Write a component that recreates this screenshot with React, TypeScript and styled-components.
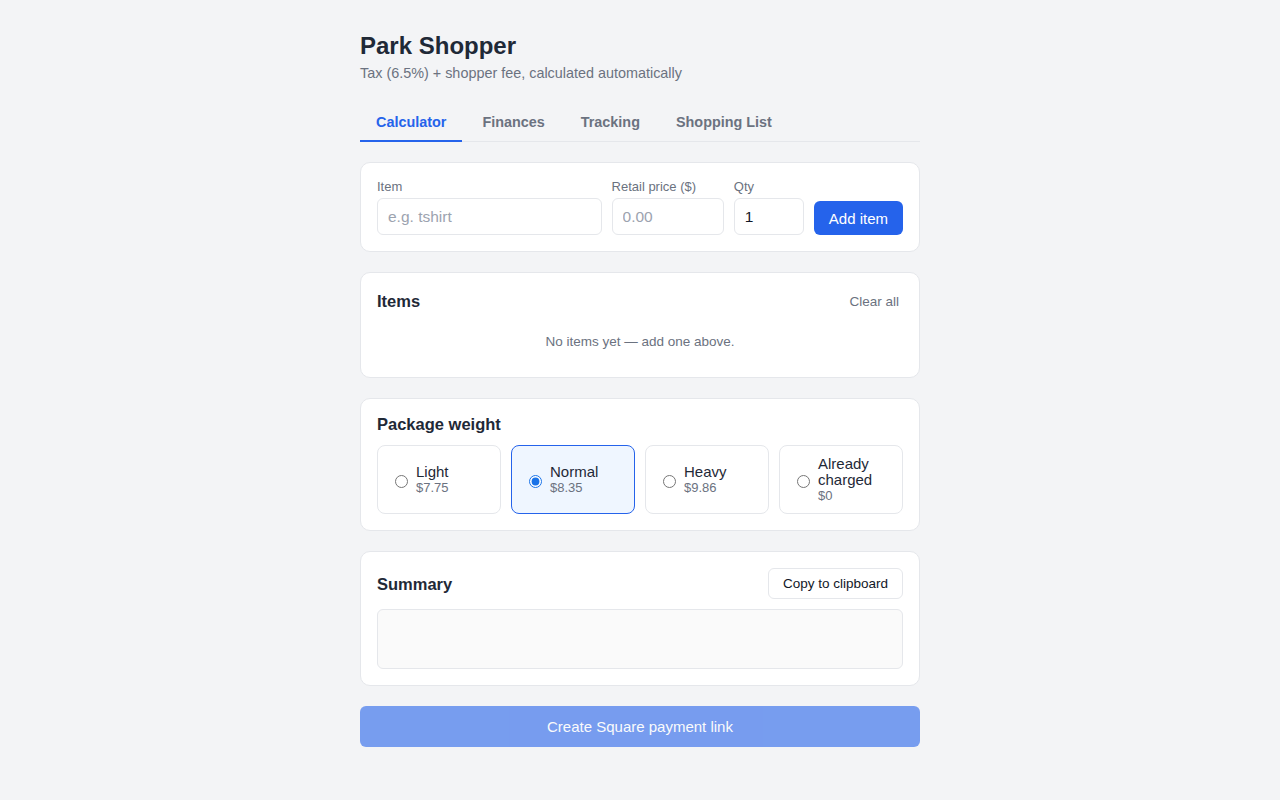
import { useState } from 'react';
import styled, { createGlobalStyle } from 'styled-components';

const GlobalStyle = createGlobalStyle`
  body {
    margin: 0;
    background: #f3f4f6;
    font-family: "Liberation Sans", Arial, sans-serif;
    color: #1f2937;
  }
  * {
    box-sizing: border-box;
  }
`;

type Weight = {
  id: string;
  name: string;
  price: string;
};

const weights: Weight[] = [
  { id: 'light', name: 'Light', price: '$7.75' },
  { id: 'normal', name: 'Normal', price: '$8.35' },
  { id: 'heavy', name: 'Heavy', price: '$9.86' },
  { id: 'charged', name: 'Already charged', price: '$0' },
];

const tabs = ['Calculator', 'Finances', 'Tracking', 'Shopping List'];

const App = () => {
  const [activeTab, setActiveTab] = useState<string>('Calculator');
  const [weight, setWeight] = useState<string>('normal');
  const [qty, setQty] = useState<string>('1');

  return (
    <>
      <GlobalStyle />
      <Page>
        <Title>Park Shopper</Title>
        <Subtitle>Tax (6.5%) + shopper fee, calculated automatically</Subtitle>

        <TabBar>
          {tabs.map((tab) => (
            <Tab key={tab} active={tab === activeTab} onClick={() => setActiveTab(tab)}>
              {tab}
            </Tab>
          ))}
        </TabBar>

        <Card>
          <AddForm>
            <Field>
              <Label>Item</Label>
              <Input placeholder="e.g. tshirt" />
            </Field>
            <Field>
              <Label>Retail price ($)</Label>
              <Input placeholder="0.00" />
            </Field>
            <Field>
              <Label>Qty</Label>
              <Input value={qty} onChange={(e) => setQty(e.target.value)} />
            </Field>
            <PrimaryButton>Add item</PrimaryButton>
          </AddForm>
        </Card>

        <Card>
          <CardHeader>
            <CardTitle>Items</CardTitle>
            <LinkButton>Clear all</LinkButton>
          </CardHeader>
          <EmptyText>No items yet — add one above.</EmptyText>
        </Card>

        <Card>
          <CardTitle>Package weight</CardTitle>
          <WeightGrid>
            {weights.map((w) => (
              <WeightOption key={w.id} selected={w.id === weight}>
                <Radio
                  type="radio"
                  name="weight"
                  checked={w.id === weight}
                  onChange={() => setWeight(w.id)}
                />
                <WeightText>
                  <WeightName>{w.name}</WeightName>
                  <WeightPrice>{w.price}</WeightPrice>
                </WeightText>
              </WeightOption>
            ))}
          </WeightGrid>
        </Card>

        <Card>
          <CardHeader>
            <CardTitle>Summary</CardTitle>
            <SecondaryButton>Copy to clipboard</SecondaryButton>
          </CardHeader>
          <SummaryBox />
        </Card>

        <PaymentButton disabled>Create Square payment link</PaymentButton>
      </Page>
    </>
  );
};

const Page = styled.div`
  width: 560px;
  margin: 0 auto;
  padding: 31px 0 40px;
  display: flex;
  flex-direction: column;
`;

const Title = styled.h1`
  margin: 0;
  font-size: 24px;
  font-weight: 700;
  line-height: 30px;
  color: #1f2937;
`;

const Subtitle = styled.p`
  margin: 2px 0 0;
  font-size: 14.4px;
  line-height: 20px;
  color: #6b7280;
`;

const TabBar = styled.div`
  display: flex;
  gap: 4px;
  margin-top: 19px;
  margin-bottom: 20px;
  border-bottom: 1px solid #e5e7eb;
`;

const Tab = styled.button<{ active: boolean }>`
  background: none;
  border: none;
  border-bottom: 2px solid ${(p) => (p.active ? '#2563eb' : 'transparent')};
  margin-bottom: -1px;
  padding: 12px 16px 9px;
  font-family: inherit;
  font-size: 14.4px;
  font-weight: 700;
  line-height: 17px;
  color: ${(p) => (p.active ? '#2563eb' : '#6b7280')};
  cursor: pointer;
`;

const Card = styled.section`
  background: #ffffff;
  border: 1px solid #e5e7eb;
  border-radius: 10px;
  padding: 16px;
  margin-bottom: 20px;
`;

const AddForm = styled.div`
  display: grid;
  grid-template-columns: 2fr 1fr 70px auto;
  gap: 10px;
  align-items: end;
`;

const Field = styled.label`
  display: flex;
  flex-direction: column;
  gap: 4px;
`;

const Label = styled.span`
  font-size: 13px;
  line-height: 15px;
  color: #6b7280;
`;

const Input = styled.input`
  width: 100%;
  height: 37px;
  padding: 0 10px;
  border: 1px solid #e5e7eb;
  border-radius: 6px;
  font-family: inherit;
  font-size: 15.5px;
  color: #111827;
  background: #ffffff;

  &::placeholder {
    color: #9ca3af;
  }
`;

const PrimaryButton = styled.button`
  height: 34px;
  padding: 0 15px;
  border: none;
  border-radius: 6px;
  background: #2563eb;
  color: #ffffff;
  font-family: inherit;
  font-size: 15px;
  cursor: pointer;
`;

const CardHeader = styled.div`
  display: flex;
  align-items: center;
  justify-content: space-between;
  min-height: 24px;
`;

const CardTitle = styled.h2`
  margin: 0;
  font-size: 16.5px;
  font-weight: 700;
  line-height: 18px;
  color: #1f2937;
`;

const LinkButton = styled.button`
  background: none;
  border: none;
  padding: 4px;
  font-family: inherit;
  font-size: 13.5px;
  color: #6b7280;
  cursor: pointer;
`;

const EmptyText = styled.p`
  margin: 20px 0 10px;
  text-align: center;
  font-size: 13.5px;
  line-height: 18px;
  color: #6b7280;
`;

const WeightGrid = styled.div`
  display: grid;
  grid-template-columns: repeat(4, 1fr);
  gap: 10px;
  margin-top: 12px;
`;

const WeightOption = styled.label<{ selected: boolean }>`
  display: flex;
  align-items: center;
  gap: 8px;
  height: 69px;
  padding: 0 12px;
  border: 1px solid ${(p) => (p.selected ? '#2563eb' : '#e5e7eb')};
  border-radius: 8px;
  background: ${(p) => (p.selected ? '#eff6ff' : '#ffffff')};
  cursor: pointer;
`;

const Radio = styled.input`
  margin: 3px 0 0 5px;
  width: 13px;
  height: 13px;
  accent-color: #1a73e8;
`;

const WeightText = styled.div`
  display: flex;
  flex-direction: column;
`;

const WeightName = styled.span`
  font-size: 15px;
  line-height: 16px;
  color: #1f2937;
`;

const WeightPrice = styled.span`
  font-size: 13px;
  line-height: 15px;
  color: #6b7280;
`;

const SecondaryButton = styled.button`
  height: 31px;
  padding: 0 14px;
  background: #ffffff;
  border: 1px solid #e5e7eb;
  border-radius: 6px;
  font-family: inherit;
  font-size: 13.5px;
  color: #111827;
  cursor: pointer;
`;

const SummaryBox = styled.div`
  margin-top: 10px;
  height: 60px;
  background: #fafafa;
  border: 1px solid #e5e7eb;
  border-radius: 6px;
`;

const PaymentButton = styled.button`
  width: 100%;
  height: 41px;
  border: none;
  border-radius: 6px;
  background: #2563eb;
  opacity: 0.6;
  color: #ffffff;
  font-family: inherit;
  font-size: 15px;
`;

export default App;
